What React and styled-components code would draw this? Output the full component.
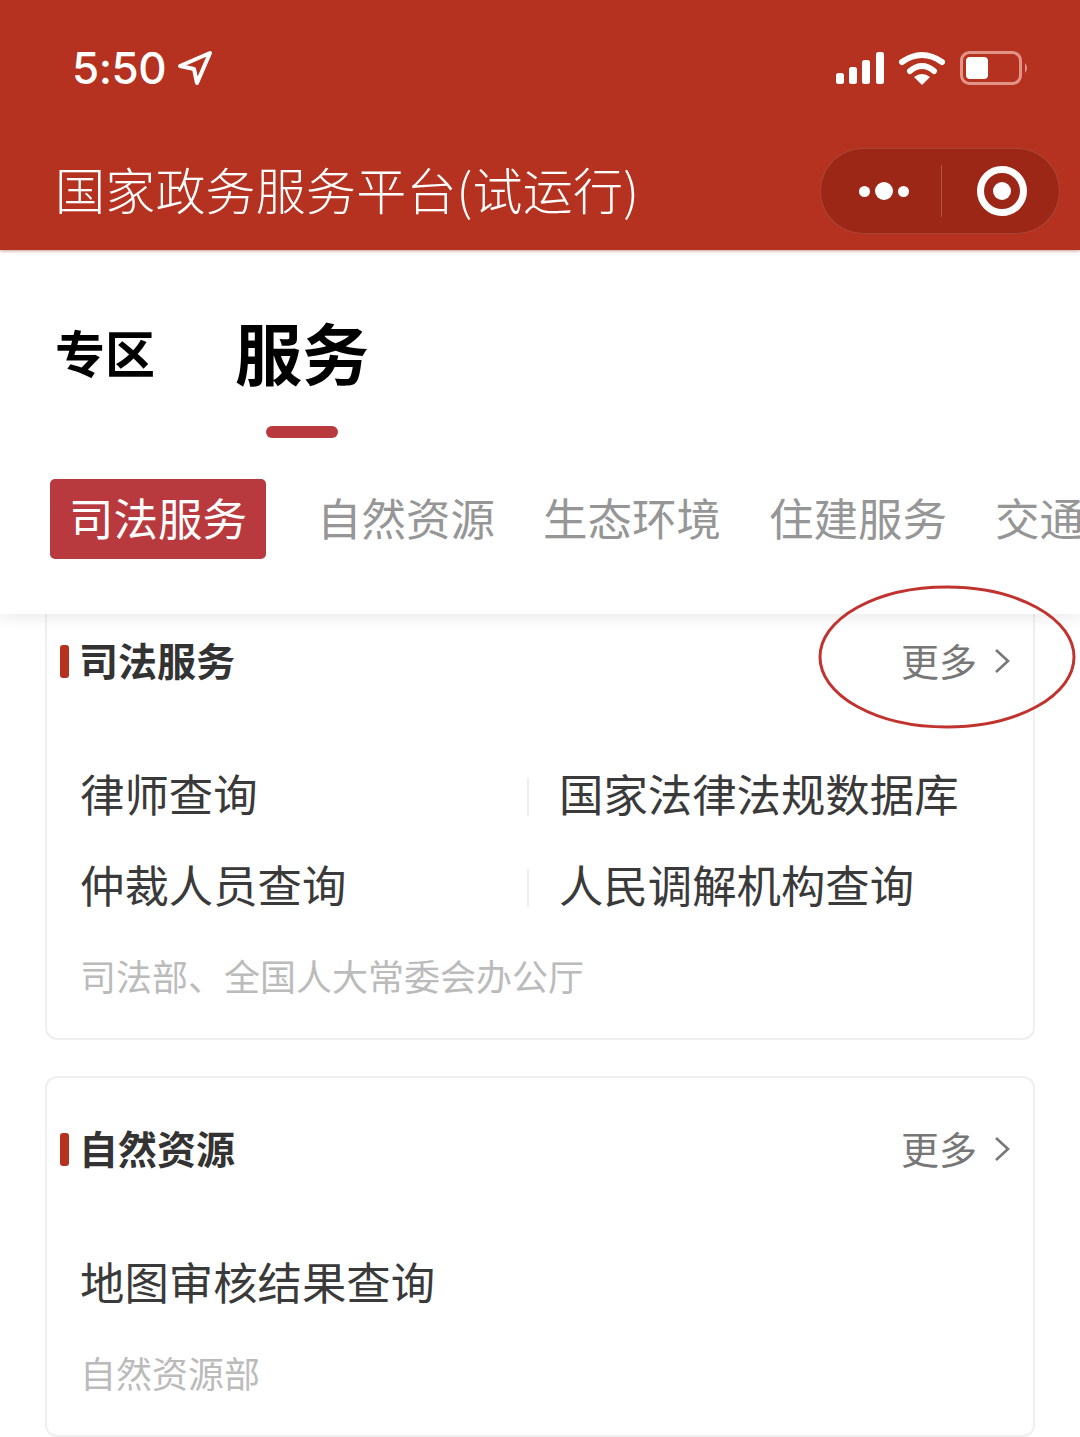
import React from 'react';
import styled, { createGlobalStyle } from 'styled-components';

const GlobalStyle = createGlobalStyle`
    html, body {
        margin: 0;
        padding: 0;
        background: #fff;
    }
    body {
        font-family: "Noto Sans CJK SC", "Noto Sans", sans-serif;
    }
`;

const Page = styled.div`
    position: relative;
    width: 1080px;
    height: 1437px;
    overflow: hidden;
    background: #fff;
`;

// red top bar
const Header = styled.header`
    position: relative;
    z-index: 2;
    height: 250px;
    background: #b4321f;
    box-shadow: 0 1px 3px rgba(150, 60, 50, 0.5);
`;

const StatusBar = styled.div`
    height: 136px;
    padding: 0 50px 0 72px;
    display: flex;
    align-items: center;
    justify-content: space-between;
    box-sizing: border-box;
`;

const TimeGroup = styled.div`
    display: flex;
    align-items: center;
    gap: 11px;
`;

const Time = styled.span`
    font-family: Inter, "Liberation Sans", sans-serif;
    font-size: 44px;
    font-weight: 500;
    line-height: 50px;
    color: #fff;
    letter-spacing: -0.5px;
`;

const StatusIcons = styled.div`
    display: flex;
    align-items: center;
    gap: 15px;
`;

const NavBar = styled.div`
    margin-top: 12px;
    padding: 0 20px 0 55px;
    display: flex;
    align-items: center;
    justify-content: space-between;
`;

const NavTitle = styled.h1`
    margin: 0;
    padding-bottom: 6px;
    font-size: 50px;
    font-weight: 300;
    line-height: 80px;
    letter-spacing: 0.2px;
    color: #fff;
    white-space: nowrap;
`;

const Capsule = styled.div`
    width: 240px;
    height: 86px;
    box-sizing: border-box;
    display: flex;
    align-items: center;
    border-radius: 43px;
    background: #9c2716;
    border: 1px solid rgba(255, 255, 255, 0.14);
`;

const CapsuleSlot = styled.div`
    flex: 1;
    box-sizing: border-box;
    padding-left: ${(p) => p.$inset}px;
    display: flex;
    align-items: center;
    justify-content: center;
`;

const CapsuleDivider = styled.div`
    width: 1px;
    height: 52px;
    background: rgba(255, 255, 255, 0.22);
`;

const Dots = styled.div`
    display: flex;
    align-items: center;
    gap: 5px;
`;

const Dot = styled.span`
    display: block;
    width: ${(p) => p.$size}px;
    height: ${(p) => p.$size}px;
    border-radius: 50%;
    background: #fff;
`;

const Ring = styled.div`
    width: 50px;
    height: 50px;
    box-sizing: border-box;
    border: 7px solid #fff;
    border-radius: 50%;
    display: flex;
    align-items: center;
    justify-content: center;
`;

// white panel with tabs
const Panel = styled.section`
    position: relative;
    z-index: 1;
    height: 364px;
    box-sizing: border-box;
    padding-top: 66px;
    background: #fff;
    box-shadow: 0 3px 16px rgba(0, 0, 0, 0.09);
`;

const TabList = styled.div`
    display: flex;
    align-items: flex-start;
    gap: 80px;
    padding-left: 55px;
`;

const Tab = styled.div`
    display: flex;
    flex-direction: column;
    align-items: center;
    height: 122px;
`;

const TabLabel = styled.span`
    height: 80px;
    box-sizing: border-box;
    padding-bottom: 10px;
    font-size: ${(p) => (p.$active ? 67 : 50)}px;
    font-weight: 700;
    line-height: 70px;
    color: #000;
`;

const TabMark = styled.span`
    display: block;
    width: 72px;
    height: 12px;
    margin-top: 30px;
    border-radius: 6px;
    background: #b83a3e;
`;

const ChipRow = styled.div`
    margin-top: 41px;
    padding-left: 50px;
    display: flex;
    align-items: center;
    gap: 48px;
    overflow: hidden;
`;

const Chip = styled.span`
    flex: none;
    height: 80px;
    box-sizing: border-box;
    padding: 0 ${(p) => (p.$active ? 19 : 0)}px 5px;
    margin-right: ${(p) => (p.$active ? 3 : 0)}px;
    border-radius: 5px;
    font-size: 44.5px;
    font-weight: 400;
    line-height: 75px;
    color: ${(p) => (p.$active ? '#fff' : '#969696')};
    background: ${(p) => (p.$active ? '#b83a3e' : 'transparent')};
`;

// service cards
const CardList = styled.main`
    margin: -26px 45px 0;
    display: flex;
    flex-direction: column;
    gap: 36px;
`;

const Card = styled.article`
    box-sizing: border-box;
    padding: 41px 23px 37px 13px;
    border: 2px solid #efefef;
    border-radius: 12px;
    background: #fff;
`;

const CardHead = styled.div`
    height: 60px;
    display: flex;
    align-items: center;
    justify-content: space-between;
`;

const CardTitle = styled.h2`
    margin: 0;
    display: flex;
    align-items: center;
    gap: 10px;
    font-size: 39px;
    font-weight: 700;
    color: #333;
`;

const TitleText = styled.span`
    padding-bottom: 4px;
    line-height: 56px;
`;

const TitleBar = styled.span`
    display: block;
    width: 9px;
    height: 33px;
    border-radius: 3px;
    background: #b4321f;
`;

const More = styled.span`
    display: flex;
    align-items: center;
    gap: 17px;
    font-size: 38px;
    font-weight: 400;
    color: #777;
`;

const MoreText = styled.span`
    padding-bottom: 2px;
    line-height: 58px;
`;

const ItemGrid = styled.div`
    margin: 60px 0 0 20px;
    display: grid;
    grid-template-columns: 447px 1fr;
    grid-auto-rows: 91px;
`;

const Item = styled.div`
    display: flex;
    align-items: center;
    gap: 30px;
    font-size: 44.4px;
    font-weight: 400;
    color: #3a3a3a;
    white-space: nowrap;
`;

const ItemText = styled.span`
    padding-bottom: 8px;
`;

const ItemDivider = styled.span`
    display: block;
    width: 2px;
    height: 38px;
    background: #eee;
`;

const Source = styled.p`
    margin: 19px 0 3px 20px;
    font-size: 36px;
    font-weight: 400;
    line-height: 46px;
    color: #bbb;
    white-space: nowrap;
`;

// hand drawn red circle on top of the screenshot
const Annotation = styled.svg`
    position: absolute;
    left: 814px;
    top: 580px;
    z-index: 3;
`;

const LocationIcon = () => (
    <svg width="36" height="36" viewBox="0 0 36 36" fill="none">
        <path d="M3 16 L33 3 L20 33 L17 19 Z" stroke="#fff" strokeWidth="4" strokeLinejoin="round" />
    </svg>
);

const SignalIcon = () => (
    <svg width="48" height="32" viewBox="0 0 48 32" fill="#fff">
        <rect x="0" y="21" width="8" height="11" rx="2.5" />
        <rect x="13" y="15" width="8" height="17" rx="2.5" />
        <rect x="26" y="8" width="8" height="24" rx="2.5" />
        <rect x="40" y="0" width="8" height="32" rx="2.5" />
    </svg>
);

const WifiIcon = () => (
    <svg width="46" height="36" viewBox="0 0 46 36" fill="none">
        <path d="M3 12 Q23 -2 43 12" stroke="#fff" strokeWidth="6" strokeLinecap="round" />
        <path d="M11 21 Q23 11 35 21" stroke="#fff" strokeWidth="6" strokeLinecap="round" />
        <path d="M15 27 Q23 21 31 27 L23 35 Z" fill="#fff" />
    </svg>
);

const BatteryIcon = () => (
    <svg width="70" height="34" viewBox="0 0 70 34" fill="none">
        <rect x="1.5" y="1.5" width="59" height="31" rx="8" stroke="#e39488" strokeWidth="3" />
        <rect x="6" y="6" width="22" height="22" rx="4" fill="#fff" />
        <path d="M65 12 Q69 17 65 22 Z" fill="#e39488" />
    </svg>
);

const Chevron = () => (
    <svg width="16" height="26" viewBox="0 0 16 26" fill="none">
        <path d="M2 2 L14 13 L2 24" stroke="#777" strokeWidth="2.6" />
    </svg>
);

const chips = ['司法服务', '自然资源', '生态环境', '住建服务', '交通运输'];

const cards = [
    {
        title: '司法服务',
        rows: [
            ['律师查询', '国家法律法规数据库'],
            ['仲裁人员查询', '人民调解机构查询'],
        ],
        source: '司法部、全国人大常委会办公厅',
    },
    {
        title: '自然资源',
        rows: [['地图审核结果查询']],
        source: '自然资源部',
    },
];

export default function App() {
    return (
        <Page>
            <GlobalStyle />
            <Header>
                <StatusBar>
                    <TimeGroup>
                        <Time>5:50</Time>
                        <LocationIcon />
                    </TimeGroup>
                    <StatusIcons>
                        <SignalIcon />
                        <WifiIcon />
                        <BatteryIcon />
                    </StatusIcons>
                </StatusBar>
                <NavBar>
                    <NavTitle>国家政务服务平台(试运行)</NavTitle>
                    <Capsule>
                        <CapsuleSlot $inset={6}>
                            <Dots>
                                <Dot $size={11} />
                                <Dot $size={18} />
                                <Dot $size={11} />
                            </Dots>
                        </CapsuleSlot>
                        <CapsuleDivider />
                        <CapsuleSlot $inset={4}>
                            <Ring>
                                <Dot $size={18} />
                            </Ring>
                        </CapsuleSlot>
                    </Capsule>
                </NavBar>
            </Header>

            <Panel>
                <TabList>
                    <Tab>
                        <TabLabel>专区</TabLabel>
                    </Tab>
                    <Tab>
                        <TabLabel $active>服务</TabLabel>
                        <TabMark />
                    </Tab>
                </TabList>
                <ChipRow>
                    {chips.map((chip, i) => (
                        <Chip key={chip} $active={i === 0}>
                            {chip}
                        </Chip>
                    ))}
                </ChipRow>
            </Panel>

            <CardList>
                {cards.map((card) => (
                    <Card key={card.title}>
                        <CardHead>
                            <CardTitle>
                                <TitleBar />
                                <TitleText>{card.title}</TitleText>
                            </CardTitle>
                            <More>
                                <MoreText>更多</MoreText>
                                <Chevron />
                            </More>
                        </CardHead>
                        <ItemGrid>
                            {card.rows.map((row) =>
                                row.map((text, i) => (
                                    <Item key={text}>
                                        {i > 0 && <ItemDivider />}
                                        <ItemText>{text}</ItemText>
                                    </Item>
                                ))
                            )}
                        </ItemGrid>
                        <Source>{card.source}</Source>
                    </Card>
                ))}
            </CardList>

            <Annotation width="266" height="154" viewBox="0 0 266 154" fill="none">
                <ellipse cx="133" cy="77" rx="127" ry="70" stroke="#c0332f" strokeWidth="3" />
            </Annotation>
        </Page>
    );
}
